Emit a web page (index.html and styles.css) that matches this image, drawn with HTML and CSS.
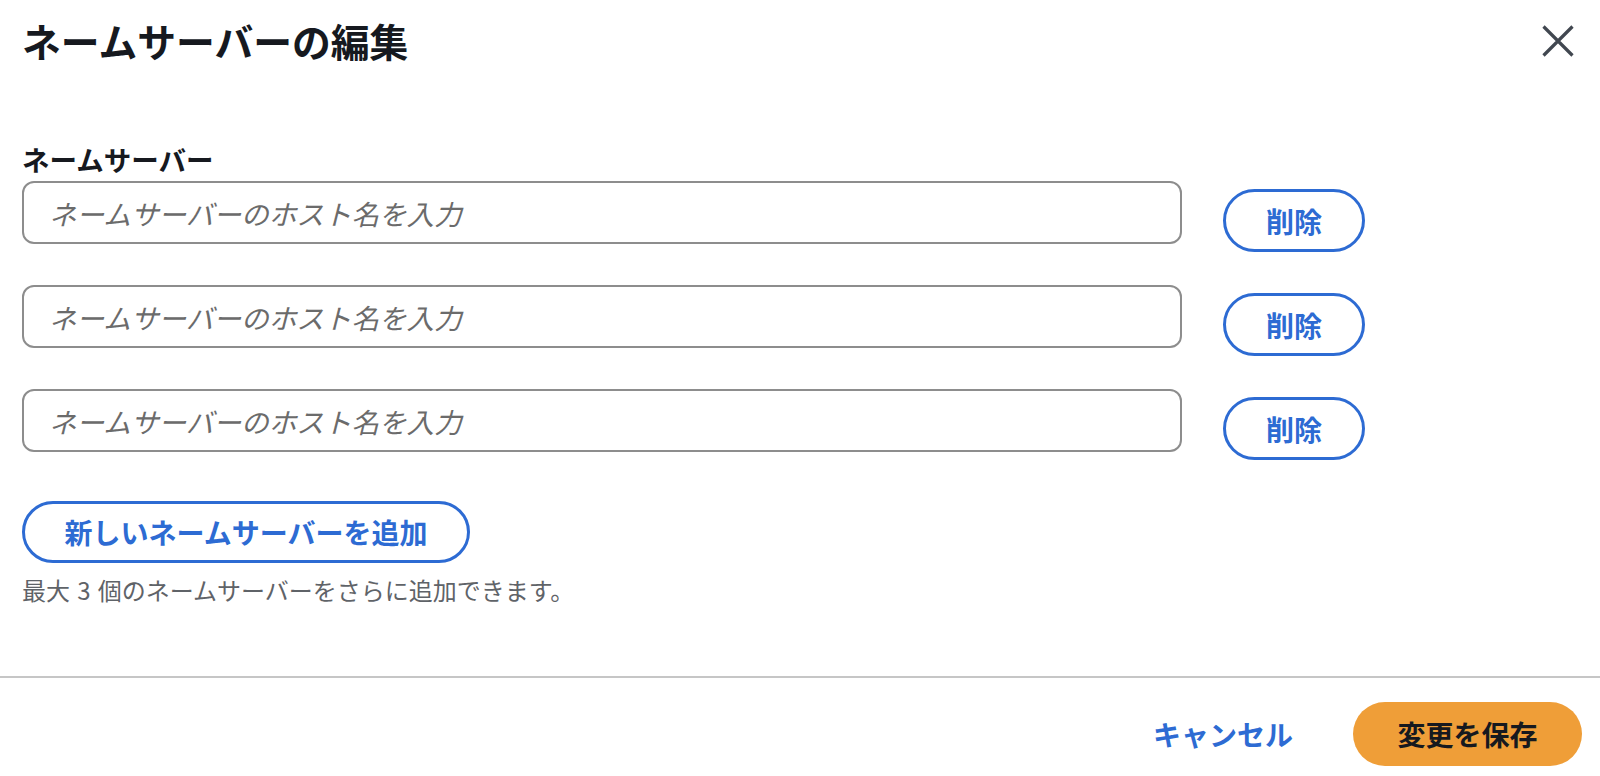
FILE: index.html
```html
<!DOCTYPE html>
<html lang="ja">
<head>
<meta charset="utf-8">
<title>ネームサーバーの編集</title>
<link rel="stylesheet" href="styles.css">
</head>
<body>
<div class="modal">
  <header class="modal-header">
    <h1 class="modal-title">ネームサーバーの編集</h1>
    <button class="close-btn" aria-label="閉じる">
      <svg width="32" height="32" viewBox="0 0 32 32"><path d="M1.5 1.5 L30.5 30.5 M30.5 1.5 L1.5 30.5" stroke="#414750" stroke-width="3.2" fill="none" stroke-linecap="butt"/></svg>
    </button>
  </header>
  <main class="modal-body">
    <label class="field-label">ネームサーバー</label>
    <div class="ns-list">
      <div class="ns-row">
        <input class="ns-input" type="text" placeholder="ネームサーバーのホスト名を入力">
        <button class="btn-outline btn-delete">削除</button>
      </div>
      <div class="ns-row">
        <input class="ns-input" type="text" placeholder="ネームサーバーのホスト名を入力">
        <button class="btn-outline btn-delete">削除</button>
      </div>
      <div class="ns-row">
        <input class="ns-input" type="text" placeholder="ネームサーバーのホスト名を入力">
        <button class="btn-outline btn-delete">削除</button>
      </div>
    </div>
    <button class="btn-outline btn-add">新しいネームサーバーを追加</button>
    <p class="helper">最大<span class="num">3</span>個のネームサーバーをさらに追加できます。</p>
  </main>
  <footer class="modal-footer">
    <button class="btn-link">キャンセル</button>
    <button class="btn-primary">変更を保存</button>
  </footer>
</div>
</body>
</html>
```
FILE: styles.css
```css
* { box-sizing: border-box; }
html, body {
  margin: 0;
  padding: 0;
  background: #ffffff;
}
body {
  font-family: "Noto Sans CJK JP", "Noto Sans", sans-serif;
  color: #16191f;
  width: 1600px;
  height: 776px;
  overflow: hidden;
}
button {
  font-family: inherit;
  cursor: pointer;
}
.modal {
  display: flex;
  flex-direction: column;
  height: 776px;
}
.modal-header {
  display: flex;
  justify-content: space-between;
  align-items: flex-start;
  padding: 17px 26px 0 22px;
}
.modal-title {
  margin: 0;
  font-size: 38.8px;
  line-height: 46px;
  font-weight: 700;
  color: #16191f;
}
.close-btn {
  border: none;
  background: none;
  padding: 0;
  margin-top: 8px;
  width: 32px;
  height: 32px;
  display: block;
}
.close-btn svg { display: block; }
.modal-body {
  padding: 79px 0 0 22px;
  display: flex;
  flex-direction: column;
  align-items: flex-start;
}
.field-label {
  font-size: 27.5px;
  font-weight: 700;
  line-height: 34px;
  color: #16191f;
}
.ns-list {
  margin-top: 5px;
  display: flex;
  flex-direction: column;
  gap: 33px;
}
.ns-row {
  display: flex;
  align-items: flex-start;
  gap: 41px;
}
.ns-input {
  width: 1160px;
  height: 63px;
  border: 2px solid #8d8d8d;
  border-radius: 12px;
  padding: 0 25px;
  font-family: inherit;
  font-size: 27.6px;
  color: #16191f;
  outline: none;
  background: #fff;
}
.ns-input::placeholder {
  color: #6b6b6b;
  font-style: italic;
}
.btn-outline {
  background: #fff;
  border: 3px solid #2d6bd3;
  border-radius: 999px;
  color: #2d6bd3;
  font-size: 28px;
  font-weight: 700;
  line-height: 1;
  display: flex;
  align-items: center;
  justify-content: center;
}
.btn-delete {
  margin-top: 8px;
  width: 142px;
  height: 63px;
  padding: 0;
}
.btn-add {
  margin-top: 41px;
  width: 448px;
  height: 62px;
  padding: 0;
}
.helper {
  margin: 12px 0 0 0;
  font-size: 24px;
  line-height: 29px;
  color: #5f6368;
}
.helper .num {
  margin: 0 0.3em;
}
.modal-footer {
  margin-top: auto;
  border-top: 2px solid #c6c6c6;
  padding: 24px 18px 10px 0;
  display: flex;
  justify-content: flex-end;
  align-items: center;
  gap: 60px;
}
.btn-link {
  border: none;
  background: none;
  padding: 0;
  font-size: 28px;
  font-weight: 700;
  color: #2d6bd3;
  line-height: 1;
}
.btn-primary {
  border: none;
  background: #ef9e38;
  border-radius: 999px;
  width: 229px;
  height: 64px;
  padding: 0;
  font-size: 28px;
  font-weight: 700;
  color: #16191f;
  line-height: 1;
}
```
